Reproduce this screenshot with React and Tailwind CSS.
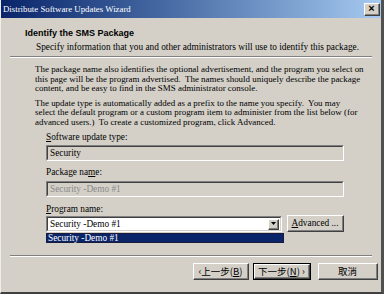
import React from "react";

const serif = { fontFamily: '"Liberation Serif", "Times New Roman", serif' };

function Raised({ className = "", children, def = false }) {
  return (
    <div className={`${def ? "border border-black" : ""} ${className}`}>
      <div className="w-full h-full border-t border-l border-t-white border-l-white border-b border-r border-b-[#404040] border-r-[#404040]">
        <div className="w-full h-full border-b border-r border-b-[#808080] border-r-[#808080] flex items-center justify-center">
          {children}
        </div>
      </div>
    </div>
  );
}

function Sunken({ className = "", children }) {
  return (
    <div className={`border-t border-l border-t-[#808080] border-l-[#808080] border-b border-r border-b-white border-r-white ${className}`}>
      <div className="w-full h-full border-t border-l border-t-[#404040] border-l-[#404040] border-b border-r border-b-[#d4d0c8] border-r-[#d4d0c8] flex items-center">
        {children}
      </div>
    </div>
  );
}

export default function App() {
  return (
    <div
      className="w-[384px] h-[294px] bg-[#d4d0c8] overflow-hidden flex flex-col border-l border-l-[#eeeeee] border-r-[3px] border-r-[#505050] border-b-2 border-b-[#404040] text-black"
      style={serif}
    >
      {/* Title bar */}
      <div className="h-[18px] flex items-center justify-between pl-[2px] pr-[1px] bg-gradient-to-r from-[#0a246a] to-[#a6caf0]">
        <span className="text-white text-[8.8px] leading-[12px] whitespace-nowrap">
          Distribute Software Updates Wizard
        </span>
        <Raised className="w-[16px] h-[13px] bg-[#d4d0c8]">
          <span className="text-[11px] leading-[11px] font-bold" style={{ fontFamily: '"Liberation Sans", sans-serif' }}>×</span>
        </Raised>
      </div>

      {/* Header */}
      <div className="h-[38px] flex flex-col pt-[10px]">
        <div
          className="pl-[24px] text-[9px] leading-[10px] font-bold whitespace-nowrap"
          style={{ fontFamily: '"Liberation Sans", Arial, sans-serif' }}
        >
          Identify the SMS Package
        </div>
        <div className="pl-[35px] mt-[4px] text-[9.3px] leading-[10px] whitespace-nowrap">
          Specify information that you and other administrators will use to identify this package.
        </div>
      </div>

      {/* Divider */}
      <div className="mx-[9px] h-[2px] border-t border-t-[#808080] border-b border-b-white" />

      {/* Body */}
      <div className="flex flex-col pl-[34px] pt-[7px] text-[8.95px] leading-[9.5px]">
        <div className="whitespace-nowrap">The package name also identifies the optional advertisement, and the program you select on</div>
        <div className="whitespace-nowrap">this page will be the program advertised.&nbsp; The names should uniquely describe the package</div>
        <div className="whitespace-nowrap">content, and be easy to find in the SMS administrator console.</div>
        <div className="whitespace-nowrap mt-[5px]">The update type is automatically added as a prefix to the name you specify.&nbsp; You may</div>
        <div className="whitespace-nowrap">select the default program or a custom program item to administer from the list below (for</div>
        <div className="whitespace-nowrap">advanced users.)&nbsp; To create a customized program, click Advanced.</div>
      </div>

      <div className="flex flex-col pl-[45px] mt-[5px] text-[9.3px] leading-[10px]">
        <div className="whitespace-nowrap">
          <span className="underline">S</span>oftware update type:
        </div>
        <Sunken className="mt-[3px] w-[298px] h-[16px] bg-[#d4d0c8]">
          <span className="pl-[2px] whitespace-nowrap">Security</span>
        </Sunken>

        <div className="whitespace-nowrap mt-[6px]">
          Package na<span className="underline">m</span>e:
        </div>
        <Sunken className="mt-[4px] w-[298px] h-[16px] bg-[#d4d0c8]">
          <span className="pl-[2px] whitespace-nowrap text-[#8a8a8a]">Security -Demo #1</span>
        </Sunken>

        <div className="whitespace-nowrap mt-[7px]">
          <span className="underline">P</span>rogram name:
        </div>

        <div className="flex items-start mt-[1px]">
          <div className="flex flex-col w-[238px]">
            <Sunken className="mt-[1px] w-[236px] h-[16px] bg-white">
              <span className="pl-[2px] whitespace-nowrap flex-1">Security -Demo #1</span>
              <Raised className="w-[11px] h-[11px] mr-[1px] bg-[#d4d0c8]">
                <svg width="5" height="3" viewBox="0 0 5 3">
                  <path d="M0 0H5L2.5 3Z" fill="#000" />
                </svg>
              </Raised>
            </Sunken>
            <div className="mt-[1px] w-[238px] h-[10px] bg-[#0a246a] border border-[#1a1a3a] text-white flex items-center">
              <span className="pl-[1px] whitespace-nowrap leading-[9px]">Security -Demo #1</span>
            </div>
          </div>
          <Raised className="ml-[3px] w-[57px] h-[17px] bg-[#d4d0c8]">
            <span className="whitespace-nowrap text-[9.3px]">
              <span className="underline">A</span>dvanced ...
            </span>
          </Raised>
        </div>
      </div>

      {/* Bottom divider */}
      <div className="mt-[12px] mx-[9px] h-[2px] border-t border-t-[#808080] border-b border-b-white" />

      {/* Buttons */}
      <div
        className="flex pl-[192px] mt-[6px] text-[9.5px]"
        style={{ fontFamily: '"Noto Sans CJK TC", "Noto Sans CJK SC", sans-serif' }}
      >
        <Raised className="w-[56px] h-[17px] bg-[#d4d0c8]">
          <span className="whitespace-nowrap leading-[10px]">
            ‹上一步(<span className="underline">B</span>)
          </span>
        </Raised>
        <Raised def className="ml-[4px] w-[58px] h-[17px] bg-[#d4d0c8]">
          <span className="whitespace-nowrap leading-[10px]">
            下一步(<span className="underline">N</span>) ›
          </span>
        </Raised>
        <Raised className="ml-[7px] w-[60px] h-[17px] bg-[#d4d0c8]">
          <span className="whitespace-nowrap leading-[10px]">取消</span>
        </Raised>
      </div>
    </div>
  );
}
